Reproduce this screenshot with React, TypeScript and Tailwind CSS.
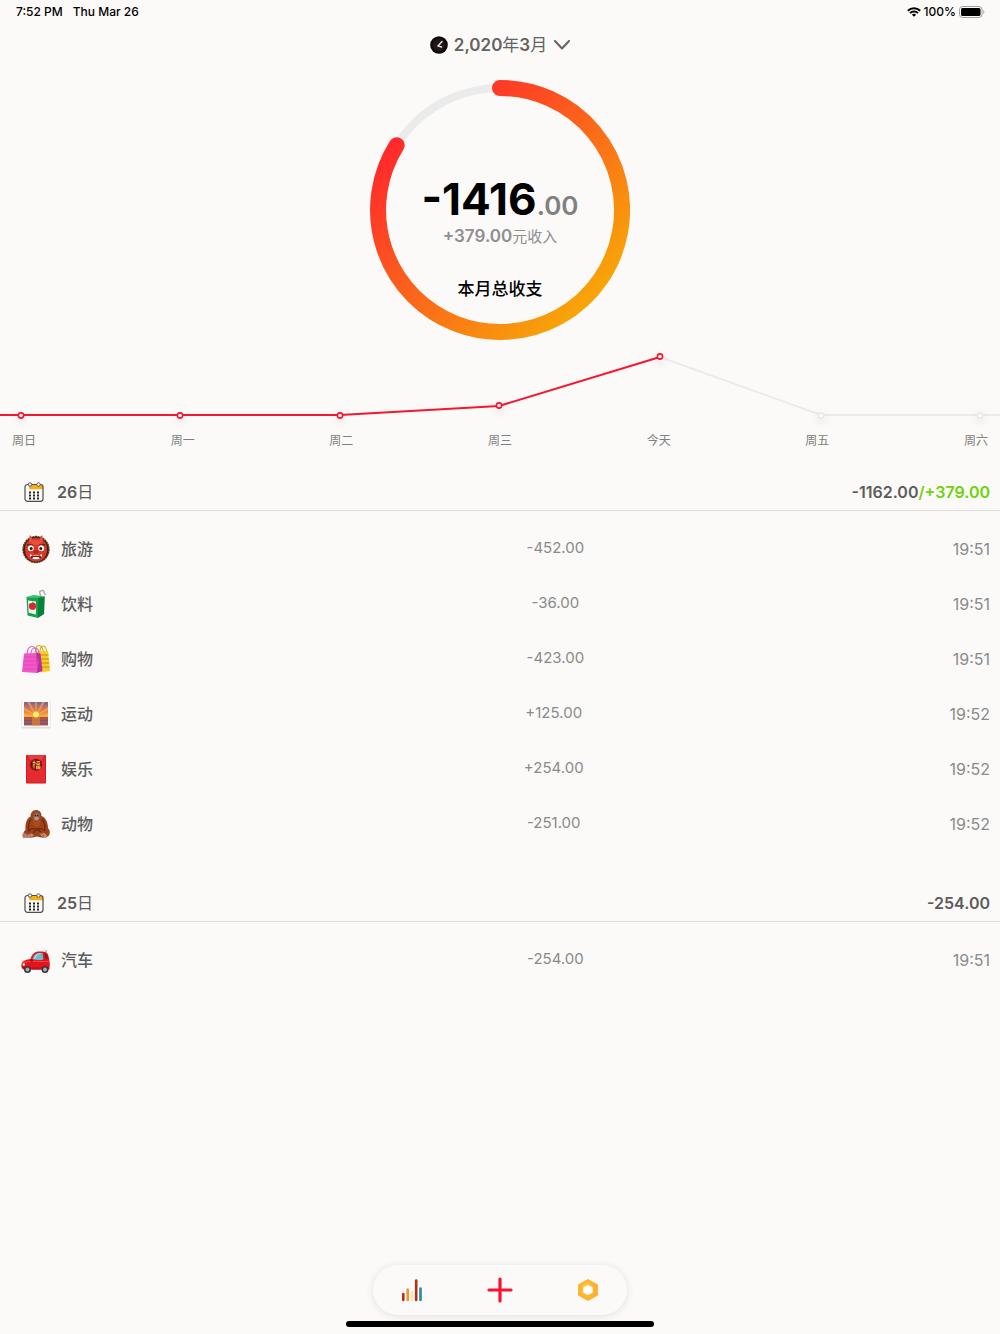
import type { ReactNode } from "react";

interface Entry {
  name: string;
  amount: string;
  time: string;
  icon: ReactNode;
}

interface Day {
  date: number;
  expense: string;
  income?: string;
  entries: Entry[];
}

function OgreIcon() {
  return (
    <svg className="w-[30px] h-[30px]" viewBox="0 0 30 30">
      <circle cx="15" cy="15.500" r="13" fill="#3c2317" stroke="#5b3a1e" strokeWidth="1.400" strokeDasharray="2 .6" />
      <path d="M15 4c7 0 11 4.500 11 11.500S21.500 27.500 15 27.500 4 22.500 4 15.500 8 4 15 4z" fill="#d8392b" />
      <path d="M9 8.500c-1.200-2.500-1.200-5 0-7.500 1.500 1.500 2.500 4 2.500 6.500zM21 8.500c1.200-2.500 1.200-5 0-7.500-1.500 1.500-2.500 4-2.500 6.500z" fill="#e8503c" />
      <ellipse cx="15" cy="8.500" rx="5" ry="2.500" fill="#e84f3b" />
      <path d="M6.500 10.800l5 .4M23.500 10.800l-5 .4" stroke="#5a120e" strokeWidth="1.200" strokeLinecap="round" />
      <circle cx="9.800" cy="14.200" r="2.900" fill="#fff" />
      <circle cx="20.200" cy="14.200" r="2.900" fill="#fff" />
      <circle cx="10.200" cy="14.400" r="1.500" fill="#2b1510" />
      <circle cx="19.800" cy="14.400" r="1.500" fill="#2b1510" />
      <ellipse cx="15" cy="17.800" rx="2.700" ry="1.700" fill="#b8221d" />
      <path d="M9 21c4 1.200 8 1.200 12 0-.2 3-2.500 4.500-6 4.500s-5.800-1.500-6-4.500z" fill="#7d1110" />
      <path d="M9 20.200v3l2-2 2 .500h4l2-.500 2 2v-3l-3 1h-6zM11 24.300l1.500-1.300h5l1.500 1.300-2 1h-4z" fill="#fff" />
    </svg>
  );
}

function JuiceIcon() {
  return (
    <svg className="w-[30px] h-[30px]" viewBox="0 0 30 30">
      <path d="M20 8L18.500 2.500l3.500-1.300 2.500 5" fill="none" stroke="#b9b3bd" strokeWidth="1.600" strokeLinejoin="round" />
      <path d="M5.500 8l7-2L24 7.500l-5 2z" fill="#2fc46a" />
      <path d="M5.500 8L17 9v20L6.500 26.500z" fill="#14a34c" />
      <path d="M17 9l6.800-1.500-.7 17.500L17 29z" fill="#08823a" />
      <path d="M7 11.500l8 1V25.500l-7.300-1.700z" fill="#f1f7ed" />
      <path d="M11.200 14.300c2.200-1.400 4.200.200 3.800 3.200-.2 2.400-1.600 3.800-3.800 3.300-2.300-.200-3.400-1.800-3.300-3.900.1-2.600 1.600-3.400 3.300-2.600z" fill="#db2734" />
      <path d="M11.200 15l.600-2.300" stroke="#6b3a1b" strokeWidth=".8" />
    </svg>
  );
}

function BagsIcon() {
  return (
    <svg className="w-[30px] h-[30px]" viewBox="0 0 30 30">
      <path d="M15 9C14 3.500 15.500 1.500 18 1.500S22 4 22.500 9M19 8c0-4 1-6 3.300-6 2.200 0 3.200 2 3.400 7" fill="none" stroke="#d9a915" strokeWidth="1.200" />
      <path d="M13 7.500l14-.500 2 20-9 1.500z" fill="#f6cc2d" />
      <path d="M20 11h7.500M20 15h8M20 19h8.300M20 23h8.500" stroke="#dc9f13" strokeWidth="1.300" />
      <path d="M6 11C6 5 8 2.500 11 2.500S15.500 5 16 11M10 10c0-4 1.500-6 4-6s4 2 4.200 7" fill="none" stroke="#d667c1" strokeWidth="1.200" />
      <path d="M3 9.500l12-.5 1 20L1 28z" fill="#f158c6" />
      <path d="M15 9l4.500.500L21.500 27 16 29z" fill="#b92e9c" />
      <path d="M15 9l3 9-2 11z" fill="#d442b0" />
      <path d="M3 13h12M2.700 17h12.500M2.300 21h13M2 25h13.500" stroke="#e545bb" strokeWidth="1" />
    </svg>
  );
}

function SunriseIcon() {
  return (
    <svg className="w-[30px] h-[30px]" viewBox="0 0 30 30">
      <defs>
        <linearGradient id="sky" x1="0" y1="0" x2="0" y2="1">
          <stop offset="0" stopColor="#75658f" />
          <stop offset=".45" stopColor="#e0775a" />
          <stop offset="1" stopColor="#ffae2c" />
        </linearGradient>
      </defs>
      <rect x=".500" y="1" width="29" height="28.500" rx="1.500" fill="#dcdcdf" />
      <rect x="1" y="1" width="28" height="27" rx="1" fill="#fbfbfd" />
      <rect x="3" y="3" width="24" height="16" fill="url(#sky)" />
      <path d="M15 17L3 8v3zM15 17L6 3h3zM15 17L14 3h2zM15 17L21 3h3zM15 17L27 8v3zM15 17L3 15v2zM15 17l12-2v2z" fill="#ffbd4a" opacity=".55" />
      <rect x="3" y="18" width="24" height="8.500" fill="#a65650" />
      <path d="M3 21.500h24M3 24.500h24" stroke="#7c5073" strokeWidth="1" />
      <path d="M11 18h8v8.500h-8z" fill="#e5842f" opacity=".65" />
      <circle cx="15" cy="15.500" r="3" fill="#fff06b" />
    </svg>
  );
}

function EnvelopeIcon() {
  return (
    <svg className="w-[30px] h-[30px]" viewBox="0 0 30 30">
      <rect x="5" y="1" width="20" height="28.500" rx=".8" fill="#b9161e" />
      <rect x="5.500" y="1" width="19" height="27.800" rx=".5" fill="#e52b30" />
      <path d="M5.500 1.500L11 9h8l5.500-7.500" fill="#ed3a3c" stroke="#a91219" strokeWidth=".7" />
      <circle cx="15" cy="10.800" r="6" fill="#781218" />
      <path d="M11.500 8.500h3M13 6.500v8M11.500 12l3-2.500M15.500 7.500h3.500M15.700 9h3v1.500h-3zM15.500 12h3.500v2.700h-3.500zM15.500 13.300H19M17.200 12v2.700" fill="none" stroke="#f3bf4d" strokeWidth=".9" />
    </svg>
  );
}

function OrangutanIcon() {
  return (
    <svg className="w-[30px] h-[30px]" viewBox="0 0 30 30">
      <path d="M15 1c3.500 0 5.500 2.500 5.500 6 4.500 1.500 6.500 7 6.500 12 2 2 2.500 5 1 7.500-3 3-8 2.500-12 1-4 1.500-9 1.500-13 0-1.500-3 0-5.500 1.500-6.500C4 14 6 9 9.500 7.500 9.500 4 11.500 1 15 1z" fill="#9d421a" />
      <path d="M10 10c-3 4-3 9-2 13M21 10c3 4 3.500 8 2.500 12M7 22c5-4 10-2 13 1M23 21c-4-3-8-1-11 3" fill="none" stroke="#6f2a0e" strokeWidth="1.300" />
      <path d="M12 12c2 3 4 3 7 0M12.500 15c2 2 4 2 6 0" fill="none" stroke="#c25c26" strokeWidth="1" />
      <path d="M15.500 3.500c2.500 0 3.500 2 3.200 4.500-.2 2.500-1.500 4-3.200 4s-3-1.500-3.200-4c-.2-2.500.9-4.500 3.200-4.500z" fill="#8b6b60" />
      <ellipse cx="15.500" cy="9.500" rx="2.200" ry="1.800" fill="#bd9584" />
      <circle cx="14.200" cy="6.500" r=".7" fill="#24140f" />
      <circle cx="16.800" cy="6.500" r=".7" fill="#24140f" />
      <path d="M1 25.500c2-1.500 4-1 5 .5l5-1.500 2 2-3 2-8 .7zM19 25l4-1 3 2-1 2.500-3 .5z" fill="#c28a78" />
      <path d="M3 25v3M6 26v2.500M9 26v2M21.500 25.500l1 2.500" stroke="#81503f" strokeWidth=".7" />
    </svg>
  );
}

function CarIcon() {
  return (
    <svg className="w-[30px] h-[30px]" viewBox="0 0 30 30">
      <path d="M24.500 8L25.500 5" stroke="#555" strokeWidth=".7" />
      <path d="M9.500 14c1.500-5 4-7.500 9-7.500 4.500 0 7.500.5 8.500 3 1 3 1.800 7 1.800 10l-.3 5H2.500C.5 23.500 0 21 .6 19c1-3.500 4.500-4.500 8.900-5z" fill="#e3141d" />
      <path d="M11.500 14c1-3.500 3-6 7-6h3l1 6.500c-4 1-8 .5-11-.5z" fill="#68b9c9" />
      <path d="M23.500 8.200c2 .2 2.500.8 2.800 2l.5 3.300-2.500.5z" fill="#7b2326" />
      <path d="M13.500 14c1-3 3-5 6-5.500" fill="none" stroke="#b4e5ec" strokeWidth="1.200" />
      <path d="M2 18c5-2 11-2 17-1.500M19 16.500h9" fill="none" stroke="#ff5248" strokeWidth=".8" />
      <ellipse cx="10.500" cy="15.500" rx="1.700" ry="1.200" fill="#b30b13" />
      <path d="M.7 21.500l3-.5v2.500H1.500zM10.500 22.500h10v2h-10z" fill="#b90f17" />
      <circle cx="2.800" cy="19.500" r="1.200" fill="#fff3cf" />
      <circle cx="6.500" cy="24.500" r="3.500" fill="#35363a" />
      <circle cx="6.500" cy="24.500" r="1.900" fill="#adafb3" />
      <circle cx="24" cy="24.500" r="3.500" fill="#35363a" />
      <circle cx="24" cy="24.500" r="1.900" fill="#adafb3" />
    </svg>
  );
}

function CalendarIcon() {
  return (
    <svg className="w-5 h-5" viewBox="0 0 20 20" fill="none">
      <path d="M4.500 2.500H16a3 3 0 0 1 3 3V7.200H5.500z" fill="#f6ae13" />
      <rect x="1" y="2.500" width="18" height="16.800" rx="2.500" stroke="#4c4c4c" strokeWidth="1.200" />
      <circle cx="6" cy="2.500" r="1.700" fill="#fff" stroke="#4c4c4c" strokeWidth=".9" />
      <circle cx="14.500" cy="2.500" r="1.700" fill="#fff" stroke="#4c4c4c" strokeWidth=".9" />
      <path d="M5 10.500h2M9 10.500h2M13 10.500h2M5 13.500h2M9 13.500h2M13 13.500h2M5 16.500h2M9 16.500h2M13 16.500h2" stroke="#222" strokeWidth="1.800" />
    </svg>
  );
}

const days: Day[] = [
  {
    date: 26,
    expense: "-1162.00",
    income: "+379.00",
    entries: [
      { name: "旅游", amount: "-452.00", time: "19:51", icon: <OgreIcon /> },
      { name: "饮料", amount: "-36.00", time: "19:51", icon: <JuiceIcon /> },
      { name: "购物", amount: "-423.00", time: "19:51", icon: <BagsIcon /> },
      { name: "运动", amount: "+125.00", time: "19:52", icon: <SunriseIcon /> },
      { name: "娱乐", amount: "+254.00", time: "19:52", icon: <EnvelopeIcon /> },
      { name: "动物", amount: "-251.00", time: "19:52", icon: <OrangutanIcon /> },
    ],
  },
  {
    date: 25,
    expense: "-254.00",
    entries: [{ name: "汽车", amount: "-254.00", time: "19:51", icon: <CarIcon /> }],
  },
];

const week = [
  { label: "周日", x: 21, y: 66 },
  { label: "周一", x: 180, y: 66 },
  { label: "周二", x: 340, y: 66 },
  { label: "周三", x: 499, y: 56 },
  { label: "今天", x: 660, y: 7 },
  { label: "周五", x: 821, y: 66, future: true },
  { label: "周六", x: 980, y: 66, future: true },
];

function StatusBar() {
  return (
    <div className="flex items-center justify-between h-6 pl-4 pr-[15px] text-xs font-medium text-black">
      <div className="flex gap-[10px]">
        <span>7:52 PM</span>
        <span>Thu Mar 26</span>
      </div>
      <div className="flex items-center gap-[3px]">
        <svg className="w-[14px] h-[10px]" viewBox="0 0 14 10" fill="none" stroke="#000" strokeWidth="1.900">
          <path d="M.8 3.700a8.900 8.900 0 0 1 12.400 0M3 6.100a5.700 5.700 0 0 1 8 0" />
          <path d="M7 9.800L4.900 7.700a3 3 0 0 1 4.200 0z" fill="#000" stroke="none" />
        </svg>
        <span>100%</span>
        <svg className="w-[26px] h-3" viewBox="0 0 26 12">
          <rect x=".5" y=".5" width="22.500" height="11" rx="3" fill="none" stroke="#a0a0a0" />
          <rect x="2" y="2" width="19.500" height="8" rx="1.600" fill="#000" />
          <path d="M24.300 4v4c1.400-.5 1.400-3.500 0-4z" fill="#a0a0a0" />
        </svg>
      </div>
    </div>
  );
}

function MonthRing() {
  return (
    <section className="grid place-items-center mt-6">
      <svg className="col-start-1 row-start-1 w-[260px] h-[260px]" viewBox="0 0 260 260" fill="none">
        <defs>
          <linearGradient id="ring" gradientUnits="userSpaceOnUse" x1="44" y1="44" x2="222" y2="222">
            <stop offset="0" stopColor="#ff2a2b" />
            <stop offset="1" stopColor="#f7a608" />
          </linearGradient>
        </defs>
        <circle cx="130" cy="130" r="122" stroke="#ebebeb" strokeWidth="8" />
        <path d="M130 8A122 122 0 1 1 26.700 65.200" stroke="url(#ring)" strokeWidth="16" strokeLinecap="round" />
      </svg>
      <div className="col-start-1 row-start-1 flex flex-col items-center pt-[58px]">
        <p className="flex items-baseline leading-10">
          <span className="text-[44px] font-bold text-black">-1416</span>
          <span className="text-[26px] font-semibold text-[#808080]">.00</span>
        </p>
        <p className="flex items-baseline leading-5 text-[#8e8e93]">
          <span className="text-[17px] font-semibold">+379.00</span>
          <span className="text-[15px]">元收入</span>
        </p>
        <h1 className="mt-8 text-[17px] leading-5 font-medium text-black">本月总收支</h1>
      </div>
    </section>
  );
}

function WeekChart() {
  return (
    <section className="mt-[9px]">
      <svg className="w-full" viewBox="0 0 1000 80" fill="none">
        <defs>
          <filter id="dot" x="-200%" y="-200%" width="500%" height="500%">
            <feDropShadow dx="0" dy="3" stdDeviation="4" floodColor="#000" floodOpacity=".12" />
          </filter>
        </defs>
        <path d="M660 8L821 66H1000" stroke="#ebebeb" strokeWidth="2" />
        <path d="M0 66H340L499 57L660 8" stroke="#f8152f" strokeWidth="2" />
        {week.map((d) => (
          <circle
            key={d.label}
            cx={d.x}
            cy={d.y + 0.5}
            r="2.600"
            fill="#fff"
            stroke={d.future ? "#e9e9e9" : "#f8152f"}
            strokeWidth="1.600"
            filter="url(#dot)"
          />
        ))}
      </svg>
      <div className="flex justify-between mt-[2px] px-3 text-xs leading-5 text-[#808080]">
        {week.map((d) => (
          <span key={d.label}>{d.label}</span>
        ))}
      </div>
    </section>
  );
}

function DaySection({ day }: { day: Day }) {
  return (
    <section>
      <header className="flex items-center justify-between h-[38px] pl-6 pr-[10px] border-b border-[#dddddd] font-semibold text-[#5c5c5c]">
        <h2 className="flex items-center gap-[13px]">
          <CalendarIcon />
          <span>
            {day.date}
            <span className="font-normal">日</span>
          </span>
        </h2>
        <p>
          {day.expense}
          {day.income && <span className="text-[#6cd30b]">/{day.income}</span>}
        </p>
      </header>
      <ul className="pt-[10px]">
        {day.entries.map((entry) => (
          <li key={entry.name} className="flex items-center justify-between h-[55px] pl-[21px] pr-[10px] text-[#8a8a8a]">
            <div className="flex items-center gap-[10px] w-[137px]">
              {entry.icon}
              <span className="font-medium text-[#5c5c5c]">{entry.name}</span>
            </div>
            <span className="text-[15px]">{entry.amount}</span>
            <time>{entry.time}</time>
          </li>
        ))}
      </ul>
    </section>
  );
}

function BottomNav() {
  return (
    <nav className="flex items-center justify-between w-[254px] h-[50px] px-6 rounded-full bg-[#fbfaf8] shadow-[0_1px_8px_rgba(0,0,0,0.1)]">
      <button type="button" aria-label="统计" className="flex items-center justify-center w-[30px] h-[30px]">
        <svg className="w-[22px] h-6" viewBox="0 0 22 24" fill="none" strokeWidth="2.600" strokeLinecap="round">
          <path d="M2.300 16v6M15.200 2.500V22" stroke="#b92d12" />
          <path d="M6.700 11.500V22" stroke="#eb962f" />
          <path d="M11 14.500V22" stroke="#fde2b8" />
          <path d="M19.500 10.500V22" stroke="#238c9d" />
        </svg>
      </button>
      <button type="button" aria-label="添加" className="flex items-center justify-center w-[30px] h-[30px]">
        <svg className="w-[26px] h-[26px]" viewBox="0 0 26 26" fill="none" stroke="#fa1131" strokeWidth="3.200" strokeLinecap="round">
          <path d="M13 2v22M2 13h22" />
        </svg>
      </button>
      <button type="button" aria-label="设置" className="flex items-center justify-center w-[30px] h-[30px]">
        <svg className="w-[22px] h-[22px]" viewBox="0 0 22 22" strokeLinejoin="round">
          <defs>
            <radialGradient id="hex" cx=".35" cy=".35" r=".7">
              <stop offset="0" stopColor="#ffc928" />
              <stop offset="1" stopColor="#ffaa35" />
            </radialGradient>
          </defs>
          <path d="M11 1.200l8.900 4.900v9.800L11 20.800l-8.900-4.900V6.100z" fill="url(#hex)" stroke="#ffb02f" strokeWidth="2" />
          <path d="M11 6.700l4 2.200v4.200l-4 2.200-4-2.200V8.900z" fill="#fff" stroke="#fff" strokeWidth="1.600" />
        </svg>
      </button>
    </nav>
  );
}

export default function App() {
  return (
    <div className="flex flex-col min-h-screen overflow-x-hidden bg-[#fbfaf8] font-[Inter,'Noto_Sans_CJK_SC',sans-serif]">
      <StatusBar />
      <main>
        <div className="flex justify-center pt-[10px]">
          <button type="button" className="flex items-center h-[22px] text-[17px] leading-[22px] font-semibold text-[#636363]">
            <svg className="w-[18px] h-[18px] mr-[6px]" viewBox="0 0 18 18" fill="none">
              <circle cx="9" cy="9" r="8.800" fill="#0c0808" />
              <circle cx="9" cy="9" r="6.500" fill="#211716" />
              <path d="M12 5.500L8 10l3.500 1" stroke="#e5e1df" strokeWidth="1.400" strokeLinecap="round" />
            </svg>
            <span>
              2,020<span className="font-normal">年</span>3<span className="font-normal">月</span>
            </span>
            <svg className="w-4 h-[10px] ml-[7px]" viewBox="0 0 16 10" fill="none" stroke="#636363" strokeWidth="2" strokeLinecap="round" strokeLinejoin="round">
              <path d="M1 1l7 7.500L15 1" />
            </svg>
          </button>
        </div>
        <MonthRing />
        <WeekChart />
        <div className="flex flex-col gap-[33px] mt-[22px]">
          {days.map((day) => (
            <DaySection key={day.date} day={day} />
          ))}
        </div>
      </main>
      <footer className="flex flex-col items-center mt-auto pb-[7px]">
        <BottomNav />
        <div className="mt-[6px] w-[308px] h-[6px] rounded-full bg-black" />
      </footer>
    </div>
  );
}
